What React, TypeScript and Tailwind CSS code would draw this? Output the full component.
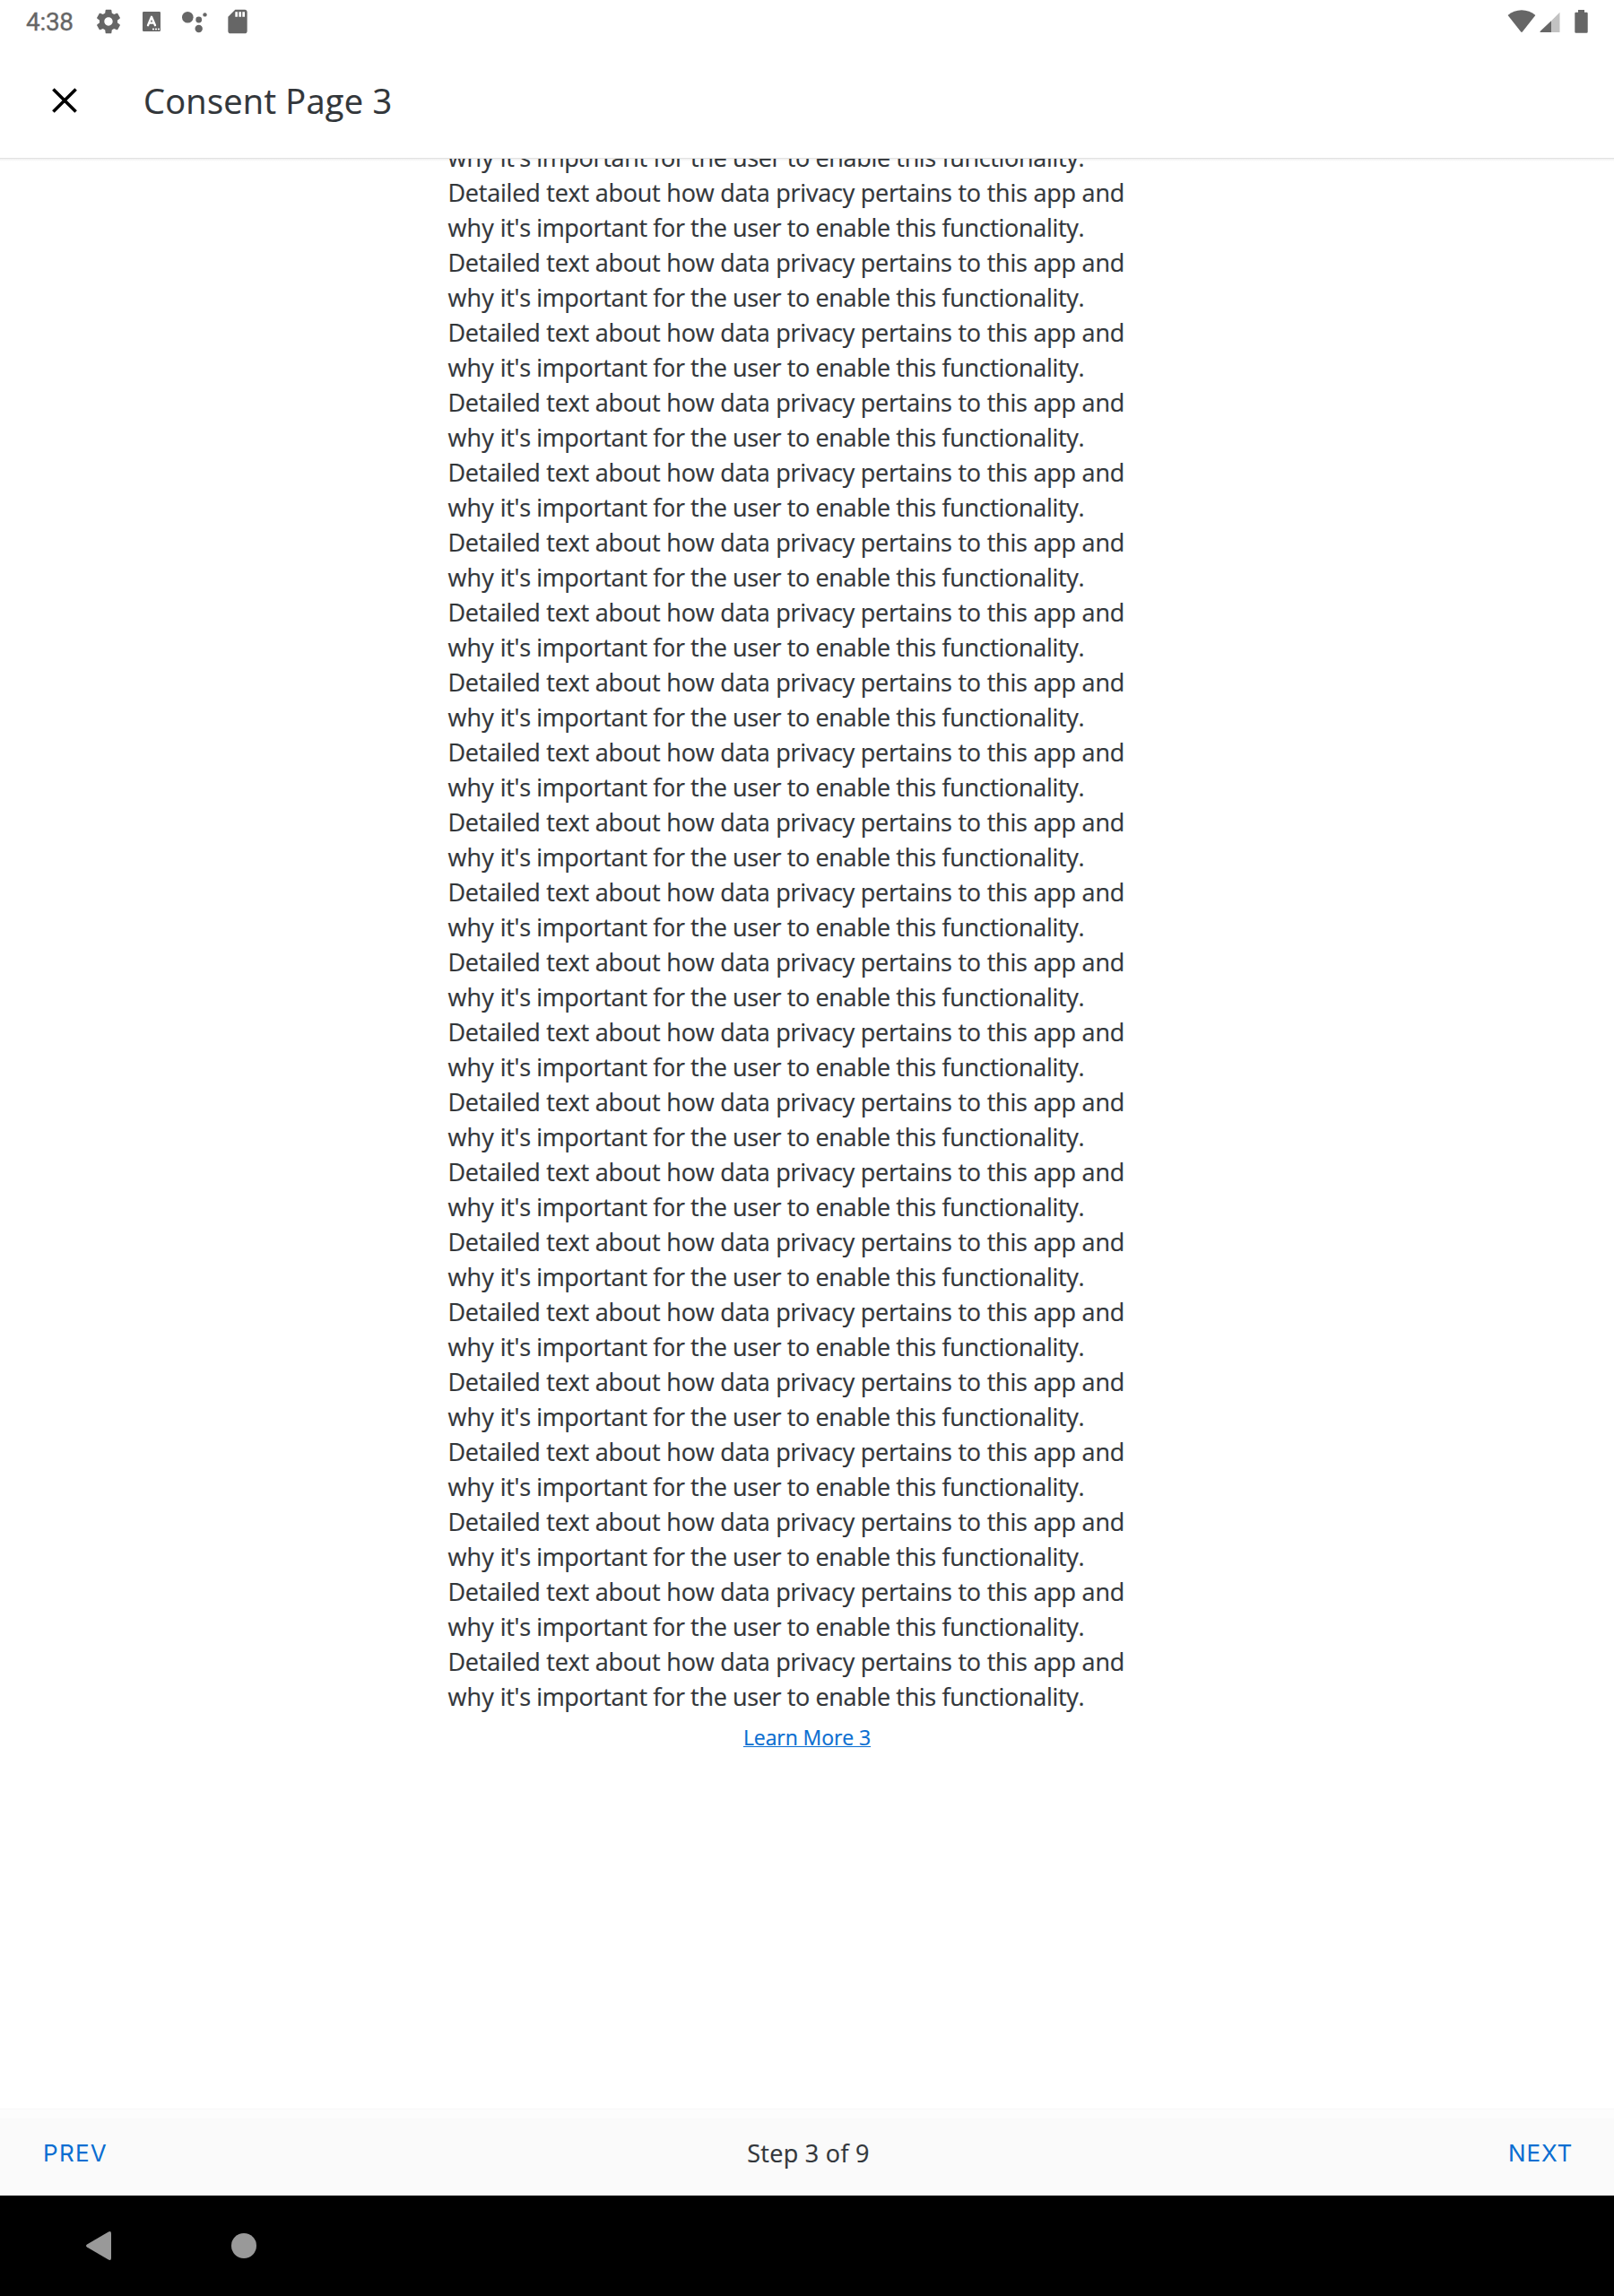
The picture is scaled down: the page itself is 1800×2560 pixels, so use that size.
const PARAGRAPHS = 22;

function StatusBar() {
  return (
    <div className="flex h-12 shrink-0 items-start text-[#666666]">
      <span className="ml-[29px] mt-[9px] w-[75px] font-['Roboto',sans-serif] text-[28px] font-normal leading-8 tracking-[-0.3px] [-webkit-text-stroke:0.3px_#666666]">
        4:38
      </span>
      <svg className="ml-px mt-2 size-8" viewBox="0 0 24 24" fill="currentColor">
        <path d="M19.43 12.98c.04-.32.07-.64.07-.98s-.03-.66-.07-.98l2.11-1.65c.19-.15.24-.42.12-.64l-2-3.46c-.12-.22-.39-.3-.61-.22l-2.49 1c-.52-.4-1.08-.73-1.69-.98l-.38-2.65C14.46 2.18 14.25 2 14 2h-4c-.25 0-.46.18-.49.42l-.38 2.65c-.61.25-1.17.59-1.69.98l-2.49-1c-.23-.09-.49 0-.61.22l-2 3.46c-.13.22-.07.49.12.64l2.11 1.65c-.04.32-.07.65-.07.98s.03.66.07.98l-2.11 1.65c-.19.15-.24.42-.12.64l2 3.46c.12.22.39.3.61.22l2.49-1c.52.4 1.08.73 1.69.98l.38 2.65c.03.24.24.42.49.42h4c.25 0 .46-.18.49-.42l.38-2.65c.61-.25 1.17-.59 1.69-.98l2.49 1c.23.09.49 0 .61-.22l2-3.46c.12-.22.07-.49-.12-.64l-2.11-1.65zM12 15.5c-1.93 0-3.5-1.57-3.5-3.5s1.57-3.5 3.5-3.5 3.5 1.57 3.5 3.5-1.57 3.5-3.5 3.5z" />
      </svg>
      <svg className="ml-[22px] mt-[13px] h-[22px] w-5" viewBox="0 0 20 22">
        <rect width="20" height="22" rx="1.2" fill="currentColor" />
        <path d="M6 15.300 10 5.800 14 15.300M7.400 12.600h5.200" fill="none" stroke="#fff" strokeWidth="2.300" strokeLinecap="round" strokeLinejoin="round" />
        <circle cx="12" cy="19.5" r="1.1" fill="#fff" />
        <circle cx="15" cy="19.5" r="1.1" fill="#fff" />
        <circle cx="18" cy="19.5" r="1.1" fill="#fff" />
      </svg>
      <svg className="ml-6 mt-3 h-[25px] w-7" viewBox="0 0 28 25" fill="currentColor">
        <circle cx="6.3" cy="7.2" r="6.3" />
        <circle cx="18.7" cy="10" r="3.4" />
        <circle cx="25.5" cy="4.4" r="2.2" />
        <circle cx="18.7" cy="20" r="4.2" />
      </svg>
      <svg className="ml-[18px] mt-2 size-8" viewBox="0 0 24 24" fill="currentColor">
        <path d="M18 2h-8L4.020 8 4 20c0 1.100.9 2 2 2h12c1.100 0 2-.9 2-2V4c0-1.100-.9-2-2-2zm-6 6h-2V4h2v4zm3 0h-2V4h2v4zm3 0h-2V4h2v4z" />
      </svg>
      <svg className="ml-auto mt-[11px] h-[26px] w-8" viewBox="0 0 32 26" fill="currentColor">
        <path d="M.6 5.900C4.800 2.400 10.200.3 16 .3s11.200 2.100 15.400 5.600L17 24.300q-1 1.200-2 0Z" />
      </svg>
      <svg className="ml-1 mt-[13px] h-6 w-[23px]" viewBox="0 0 23 24">
        <path d="M22.500.8V22.900H13V10.300Z" fill="#c2c2c2" />
        <path d="M13 10.300V22.900H1.200Q-.2 22.900.8 21.800Z" fill="currentColor" />
      </svg>
      <svg className="ml-4 mr-[29px] mt-[11px] h-[26px] w-[15px]" viewBox="0 0 15 26" fill="currentColor">
        <path d="M4 0h7v2.700h2.500q1.200 0 1.200 1.200v20.700q0 1.200-1.200 1.200H1.500q-1.200 0-1.200-1.200V3.900q0-1.200 1.200-1.200H4Z" />
      </svg>
    </div>
  );
}

function AppBar() {
  return (
    <header className="flex h-32 shrink-0 items-center">
      <svg className="ml-[58px] h-7 w-7" viewBox="0 0 28 28" fill="none" stroke="#000" strokeWidth="3.600">
        <path d="M1.400 1.400 26.600 26.600M26.600 1.400 1.400 26.600" />
      </svg>
      <h1 className="ml-[74px] text-[38px] leading-[56px] tracking-[0.26px]">Consent Page 3</h1>
    </header>
  );
}

function ReasonLine() {
  return (
    <p className="tracking-[-0.32px] [word-spacing:-0.2px]">
      <span className="tracking-[0.1px]">why </span>
      it's important for the user to enable this functionality.
    </p>
  );
}

export default function App() {
  return (
    <div className="flex h-[2560px] w-[1800px] flex-col overflow-hidden bg-white font-['Open_Sans','Noto_Sans',sans-serif] text-[#32363a] [-webkit-text-stroke:0.2px_currentColor]">
      <StatusBar />
      <AppBar />
      <div className="relative z-10 -mb-1 h-1 shrink-0 border-t border-[#e2e2e2] bg-linear-to-b from-black/6 to-transparent" />

      <main className="flex min-h-0 flex-1 flex-col items-center overflow-hidden">
        <div className="-mt-5 w-[801px] shrink-0 whitespace-nowrap text-[27px] leading-[39px]">
          <ReasonLine />
          {Array.from({ length: PARAGRAPHS }, (_, i) => (
            <div key={i}>
              <p className="tracking-[-0.22px]">Detailed text about how data privacy pertains to this app and</p>
              <ReasonLine />
            </div>
          ))}
        </div>
        <a className="mt-2.5 text-[23px] leading-8 tracking-[-0.08px] text-[#0a6ed1] underline decoration-1 underline-offset-1">
          Learn More 3
        </a>
      </main>

      <footer className="flex h-[97px] shrink-0 flex-col border-t border-[#f7f7f7] bg-[#fafafa]">
        <div className="h-2.5 bg-[#fdfdfd]" />
        <div className="grid flex-1 grid-cols-3 items-center px-12 pb-2 text-[27px] leading-[38px]">
          <span className="font-['Inter',sans-serif] text-[26px] tracking-[1.3px] text-[#0a6ed1] [-webkit-text-stroke:0]">PREV</span>
          <span className="ml-[3px] justify-self-center tracking-[0.3px]">Step 3 of 9</span>
          <span className="-mr-0.5 justify-self-end font-['Inter',sans-serif] text-[26px] tracking-[0.8px] text-[#0a6ed1] [-webkit-text-stroke:0]">NEXT</span>
        </div>
      </footer>

      <nav className="flex h-28 shrink-0 items-center bg-black text-[#999999]">
        <svg className="ml-24 h-8 w-7" viewBox="0 0 28 32" fill="currentColor">
          <path d="M1 14.400 24.500.7Q28-1 28 2.300V29.700Q28 33 24.500 31.300L1 17.600Q-1 16 1 14.400Z" />
        </svg>
        <div className="ml-[134px] size-7 rounded-full bg-[#999999]" />
      </nav>
    </div>
  );
}
